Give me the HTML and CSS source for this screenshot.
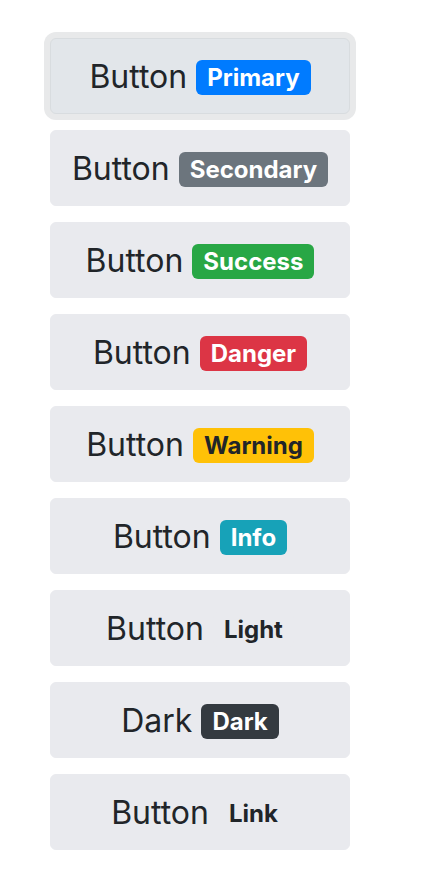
FILE: index.html
```html
<!DOCTYPE html>
<html>
<head>
<meta charset="utf-8">
<link rel="stylesheet" href="styles.css">
</head>
<body>
<div class="stack">
  <button class="btn focus">Button <span class="badge primary">Primary</span></button>
  <button class="btn">Button <span class="badge secondary">Secondary</span></button>
  <button class="btn">Button <span class="badge success">Success</span></button>
  <button class="btn">Button <span class="badge danger">Danger</span></button>
  <button class="btn">Button <span class="badge warning">Warning</span></button>
  <button class="btn">Button <span class="badge info">Info</span></button>
  <button class="btn">Button <span class="badge light">Light</span></button>
  <button class="btn">Dark <span class="badge dark">Dark</span></button>
  <button class="btn">Button <span class="badge link">Link</span></button>
</div>
</body>
</html>
```
FILE: styles.css
```css
html, body {
  margin: 0;
  padding: 0;
  background: #ffffff;
}
body {
  font-family: Inter, "Noto Sans", sans-serif;
}
.stack {
  display: flex;
  flex-direction: column;
  align-items: flex-start;
  gap: 16px;
  padding: 38px 0 0 50px;
}
.btn {
  box-sizing: border-box;
  display: flex;
  align-items: center;
  justify-content: center;
  gap: 9px;
  width: 300px;
  height: 76px;
  background: #e9eaee;
  border: 1px solid #e9eaee;
  border-radius: 6px;
  font-family: Inter, "Noto Sans", sans-serif;
  font-size: 32px;
  color: #212529;
  padding: 0;
  white-space: nowrap;
}
.btn.focus {
  background: #e2e6ea;
  border-color: #d8dcdf;
  box-shadow: 0 0 0 6px #e8e9ea;
}
.badge {
  display: inline-block;
  margin-top: 3px;
  font-size: 24px;
  font-weight: 700;
  line-height: 1;
  padding: 5.5px 11px;
  border-radius: 6px;
  color: #ffffff;
}
.primary { background: #007bff; }
.secondary { background: #6c757d; }
.success { background: #28a745; }
.danger { background: #dc3545; }
.warning { background: #ffc107; color: #212529; }
.info { background: #17a2b8; }
.light { background: #e9eaee; color: #212529; }
.dark { background: #343a40; }
.link { background: transparent; color: #212529; }
```
